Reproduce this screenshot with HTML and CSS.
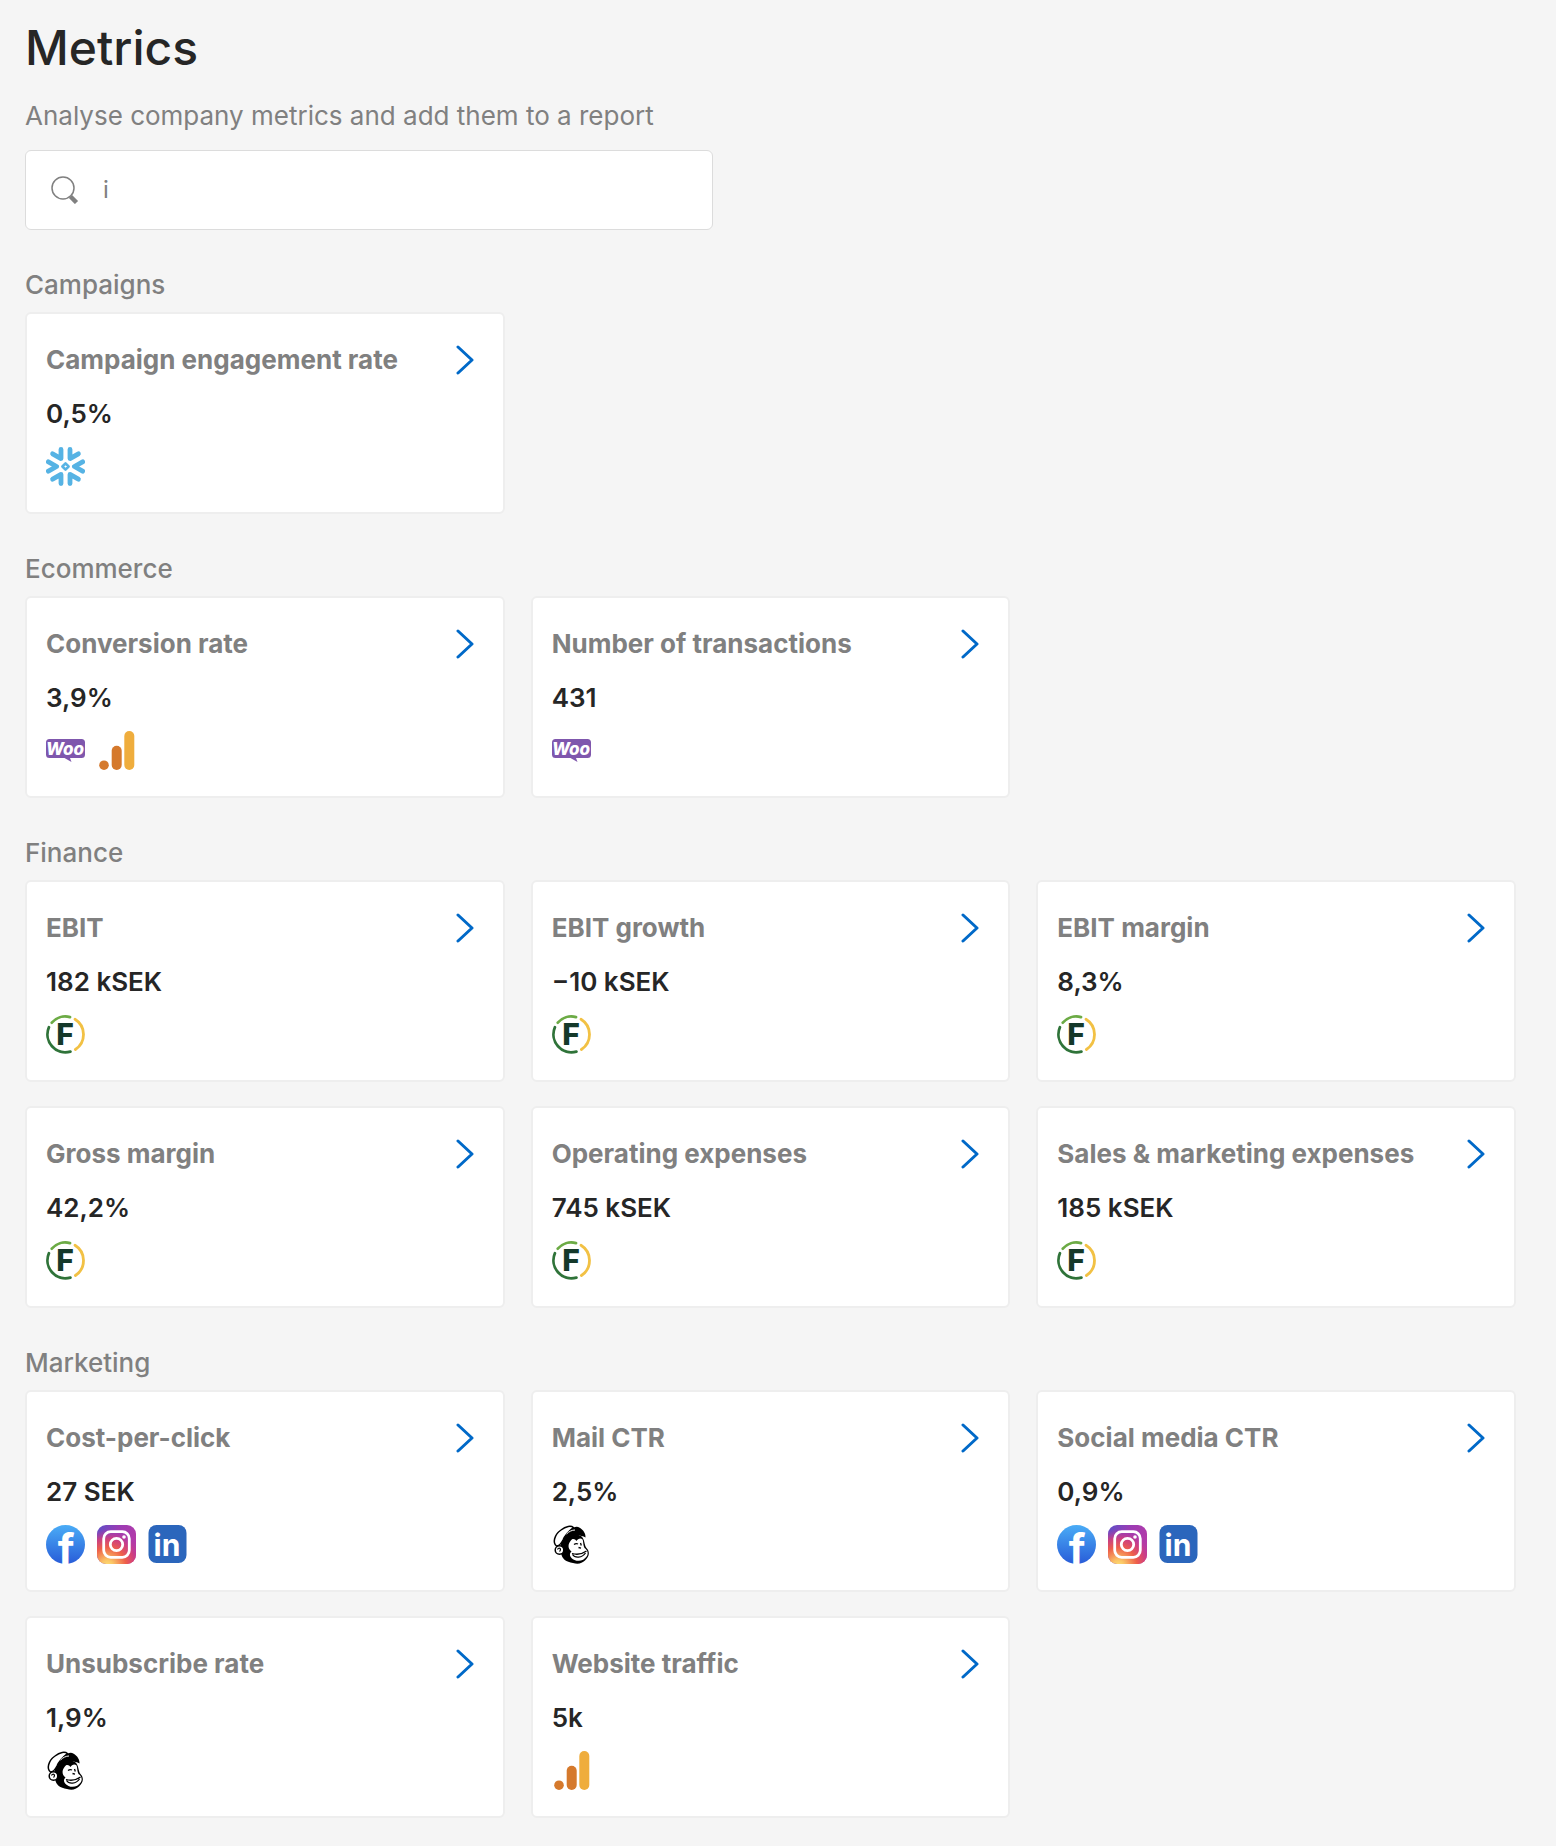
FILE: index.html
```html
<!DOCTYPE html>
<html lang="en">
<head>
    <meta charset="UTF-8">
    <meta name="viewport" content="width=device-width, initial-scale=1.0">
    <title>Metrics</title>
    <link rel="stylesheet" href="styles.css">
</head>
<body>

    <!-- Icon definitions -->
    <svg class="defs" width="0" height="0" aria-hidden="true">
        <defs>
            <linearGradient id="fbFill" x1="0" y1="0" x2="0" y2="1">
                <stop offset="0" stop-color="#4aacf6"/>
                <stop offset="1" stop-color="#285cd8"/>
            </linearGradient>
            <linearGradient id="igBase" x1="0" y1="0" x2="1" y2="0.4">
                <stop offset="0" stop-color="#5b50c8"/>
                <stop offset="0.5" stop-color="#9a3cb4"/>
                <stop offset="1" stop-color="#b43aa8"/>
            </linearGradient>
            <radialGradient id="igGlow" cx="0.27" cy="1.05" r="0.95">
                <stop offset="0" stop-color="#fde07a"/>
                <stop offset="0.15" stop-color="#fbc766"/>
                <stop offset="0.5" stop-color="#ee5f4a"/>
                <stop offset="0.75" stop-color="#d23f7c" stop-opacity="0.9"/>
                <stop offset="1" stop-color="#b43aa8" stop-opacity="0"/>
            </radialGradient>
        </defs>
        <symbol id="chevron" viewBox="0 0 18 30">
            <path d="M2 2L16 15L2 28" fill="none" stroke="#0069c8" stroke-width="3" stroke-linecap="round" stroke-linejoin="round"/>
        </symbol>
        <symbol id="snowflake" viewBox="0 0 39 39">
            <g fill="none" stroke="#56b3e4" stroke-width="4.8" stroke-linecap="round" stroke-linejoin="round">
                <path d="M15 2.4V11.6L6.6 6.8"/>
                <path d="M24 2.4V11.6L32.4 6.8"/>
                <path d="M15 36.6V27.4L6.6 32.2"/>
                <path d="M24 36.6V27.4L32.4 32.2"/>
                <path d="M2.4 14.8L10.6 19.5L2.4 24.2"/>
                <path d="M36.6 14.8L28.4 19.5L36.6 24.2"/>
                <path d="M19.5 16.4L22.6 19.5L19.5 22.6L16.4 19.5Z" stroke-width="2.6"/>
            </g>
        </symbol>
        <symbol id="woo" viewBox="0 0 39 39">
            <path d="M3.5 8H35.5A3.5 3.5 0 0 1 39 11.5V23.5A3.5 3.5 0 0 1 35.5 27H24L25.500 31L18.5 27H3.5A3.5 3.5 0 0 1 0 23.5V11.5A3.5 3.5 0 0 1 3.5 8Z" fill="#7f57ad"/>
        </symbol>
        <symbol id="analytics" viewBox="0 0 39 39">
            <circle cx="7" cy="34.2" r="4.8" fill="#d5792c"/>
            <rect x="14.7" y="14.7" width="10" height="24.3" rx="5" fill="#d5792c"/>
            <rect x="27.3" y="0" width="10" height="39" rx="5" fill="#efad3d"/>
        </symbol>
        <symbol id="fortnox" viewBox="0 0 39 39">
            <g fill="none" stroke-width="2.8" stroke-linecap="round">
                <path d="M5.8 7.7A18 18 0 0 1 24 2.1" stroke="#6cab45"/>
                <path d="M29 4.2A18 18 0 0 1 29.4 34.5" stroke="#f2c144"/>
                <path d="M2.9 12.3A18 18 0 0 0 24.4 36.6" stroke="#2f7339"/>
            </g>
        </symbol>
        <symbol id="facebook" viewBox="0 0 39 39">
            <circle cx="19.5" cy="19.5" r="19.5" fill="url(#fbFill)"/>
        </symbol>
        <symbol id="instagram" viewBox="0 0 39 39">
            <rect width="39" height="39" rx="9" fill="url(#igBase)"/>
            <rect width="39" height="39" rx="9" fill="url(#igGlow)"/>
            <g fill="none" stroke="#fff" stroke-width="2.8">
                <rect x="6.7" y="6.7" width="25.6" height="25.6" rx="7"/>
                <circle cx="19.5" cy="19.5" r="6.2"/>
            </g>
            <circle cx="27" cy="12" r="1.8" fill="#fff"/>
        </symbol>
        <symbol id="linkedin" viewBox="0 0 39 39">
            <rect x="0.5" y="0" width="38" height="38" rx="8" fill="#2b66bc"/>
        </symbol>
        <symbol id="mailchimp" viewBox="0 0 39 39">
            <path d="M9 15C14 9 22 7 29 11C33 14 32 20 34.5 23C38.500 27 37 32 33 35.500C30 38.500 26 39.500 21 38C14 37 10 34 9 28Z"/>
            <path d="M4.5 21C.5 18 2 10 9 5C14 1 19 .5 21.5 2.5C17 6 13 10 11 15C9 19 7 21 4.5 21Z" fill="#fff" stroke="#000" stroke-width="1.5"/>
            <path d="M12 14C15 7 21 1.500 25 1.800C30 3 34 8 33.500 12.500C28 9.500 19 10 12 14Z"/>
            <path d="M14.500 9C17 6.500 20 5 23 5" fill="none" stroke="#fff" stroke-width="1"/>
            <path d="M18.500 16C20 13 23 13.500 24.500 16C26 13 30.500 12.500 31 16C31.300 19 31.500 21 32.500 23C35.500 25 36.500 28 35 31C32 35.500 27 37 22.500 35C18 33 16.500 29 19.500 26.500C15.500 23.500 16 19 18.500 16Z" fill="#fff"/>
            <circle cx="7.5" cy="25" r="4.300" fill="#fff" stroke="#000" stroke-width="1.500"/>
            <path d="M5.5 24.500C7 21.500 10 24 7.500 26.500" fill="none" stroke="#000" stroke-width="1.200"/>
            <path d="M22 19.500Q24 18 26 19M28.500 18L29.300 20.500M26.500 22.500L29 23.200M20 28.500C25 30 31 28.500 34.500 26M20.500 29.500C23 33.500 30 33 33.500 28" fill="none" stroke="#000" stroke-width="1.300"/>
        </symbol>
    </svg>

    <main class="page">
        <h1>Metrics</h1>
        <label class="intro" for="search">Analyse company metrics and add them to a report</label>
        <div class="search">
            <svg class="search-icon" viewBox="0 0 28 28" aria-hidden="true">
                <circle cx="12" cy="12" r="11" fill="none" stroke="#808080" stroke-width="1.5"/>
                <path d="M19.500 20.500L25.500 26.500" stroke="#808080" stroke-width="4.5"/>
            </svg>
            <input type="text" id="search" value="i">
        </div>

        <section>
            <h2>Campaigns</h2>
            <div class="cards">
                <a class="card" href="#">
                    <div class="card-head"><h3>Campaign engagement rate</h3><svg class="chevron"><use href="#chevron"/></svg></div>
                    <p class="value">0,5%</p>
                    <div class="sources"><svg><use href="#snowflake"/></svg></div>
                </a>
            </div>
        </section>

        <section>
            <h2>Ecommerce</h2>
            <div class="cards">
                <a class="card" href="#">
                    <div class="card-head"><h3>Conversion rate</h3><svg class="chevron"><use href="#chevron"/></svg></div>
                    <p class="value">3,9%</p>
                    <div class="sources"><svg><use href="#woo"/><text class="woo-text" x="19" y="24">Woo</text></svg><svg><use href="#analytics"/></svg></div>
                </a>
                <a class="card" href="#">
                    <div class="card-head"><h3>Number of transactions</h3><svg class="chevron"><use href="#chevron"/></svg></div>
                    <p class="value">431</p>
                    <div class="sources"><svg><use href="#woo"/><text class="woo-text" x="19" y="24">Woo</text></svg></div>
                </a>
            </div>
        </section>

        <section>
            <h2>Finance</h2>
            <div class="cards">
                <a class="card" href="#">
                    <div class="card-head"><h3>EBIT</h3><svg class="chevron"><use href="#chevron"/></svg></div>
                    <p class="value">182 kSEK</p>
                    <div class="sources"><svg><use href="#fortnox"/><text class="fortnox-text" x="19" y="30">F</text></svg></div>
                </a>
                <a class="card" href="#">
                    <div class="card-head"><h3>EBIT growth</h3><svg class="chevron"><use href="#chevron"/></svg></div>
                    <p class="value">−10 kSEK</p>
                    <div class="sources"><svg><use href="#fortnox"/><text class="fortnox-text" x="19" y="30">F</text></svg></div>
                </a>
                <a class="card" href="#">
                    <div class="card-head"><h3>EBIT margin</h3><svg class="chevron"><use href="#chevron"/></svg></div>
                    <p class="value">8,3%</p>
                    <div class="sources"><svg><use href="#fortnox"/><text class="fortnox-text" x="19" y="30">F</text></svg></div>
                </a>
                <a class="card" href="#">
                    <div class="card-head"><h3>Gross margin</h3><svg class="chevron"><use href="#chevron"/></svg></div>
                    <p class="value">42,2%</p>
                    <div class="sources"><svg><use href="#fortnox"/><text class="fortnox-text" x="19" y="30">F</text></svg></div>
                </a>
                <a class="card" href="#">
                    <div class="card-head"><h3>Operating expenses</h3><svg class="chevron"><use href="#chevron"/></svg></div>
                    <p class="value">745 kSEK</p>
                    <div class="sources"><svg><use href="#fortnox"/><text class="fortnox-text" x="19" y="30">F</text></svg></div>
                </a>
                <a class="card" href="#">
                    <div class="card-head"><h3>Sales &amp; marketing expenses</h3><svg class="chevron"><use href="#chevron"/></svg></div>
                    <p class="value">185 kSEK</p>
                    <div class="sources"><svg><use href="#fortnox"/><text class="fortnox-text" x="19" y="30">F</text></svg></div>
                </a>
            </div>
        </section>

        <section>
            <h2>Marketing</h2>
            <div class="cards">
                <a class="card" href="#">
                    <div class="card-head"><h3>Cost-per-click</h3><svg class="chevron"><use href="#chevron"/></svg></div>
                    <p class="value">27 SEK</p>
                    <div class="sources">
                        <svg><use href="#facebook"/><text class="facebook-text" x="20" y="39">f</text></svg>
                        <svg><use href="#instagram"/></svg>
                        <svg><use href="#linkedin"/><text class="linkedin-text" x="19" y="31">in</text></svg>
                    </div>
                </a>
                <a class="card" href="#">
                    <div class="card-head"><h3>Mail CTR</h3><svg class="chevron"><use href="#chevron"/></svg></div>
                    <p class="value">2,5%</p>
                    <div class="sources"><svg><use href="#mailchimp"/></svg></div>
                </a>
                <a class="card" href="#">
                    <div class="card-head"><h3>Social media CTR</h3><svg class="chevron"><use href="#chevron"/></svg></div>
                    <p class="value">0,9%</p>
                    <div class="sources">
                        <svg><use href="#facebook"/><text class="facebook-text" x="20" y="39">f</text></svg>
                        <svg><use href="#instagram"/></svg>
                        <svg><use href="#linkedin"/><text class="linkedin-text" x="19" y="31">in</text></svg>
                    </div>
                </a>
                <a class="card" href="#">
                    <div class="card-head"><h3>Unsubscribe rate</h3><svg class="chevron"><use href="#chevron"/></svg></div>
                    <p class="value">1,9%</p>
                    <div class="sources"><svg><use href="#mailchimp"/></svg></div>
                </a>
                <a class="card" href="#">
                    <div class="card-head"><h3>Website traffic</h3><svg class="chevron"><use href="#chevron"/></svg></div>
                    <p class="value">5k</p>
                    <div class="sources"><svg><use href="#analytics"/></svg></div>
                </a>
            </div>
        </section>
    </main>

</body>
</html>
```
FILE: styles.css
```css
* {
    box-sizing: border-box;
}
body {
    margin: 0;
    background-color: #f5f5f5;
    color: #262626;
    font-family: Inter, sans-serif;
    font-size: 26px;
    line-height: 32px;
}
h1, h2, h3, p {
    margin: 0;
}
.defs {
    display: block;
}
.page {
    padding: 18px 40px 28px 25px;
}
h1 {
    font-size: 48px;
    font-weight: 500;
    line-height: 60px;
}
.intro {
    display: block;
    margin: 22px 0 18px;
    color: #808080;
}
.search {
    display: flex;
    align-items: center;
    gap: 24px;
    max-width: 688px;
    height: 80px;
    padding: 0 25px;
    background: white;
    border: 1px solid #dcdcdc;
    border-radius: 6px;
}
.search-icon {
    width: 28px;
    height: 28px;
}
.search input {
    flex: 1;
    min-width: 0;
    padding: 0;
    border: none;
    outline: none;
    background: none;
    color: #808080;
    font: inherit;
    font-size: 24px;
}
section {
    margin-top: 39px;
}
h2 {
    margin-bottom: 11px;
    color: #808080;
    font-size: 26px;
    font-weight: 500;
}
.cards {
    display: grid;
    grid-template-columns: repeat(3, 1fr);
    gap: 24px 26px;
}
.card {
    display: block;
    padding: 28px 19px 26px;
    background: white;
    border: 2px solid #eeeeee;
    border-radius: 6px;
    color: inherit;
    line-height: 36px;
    text-decoration: none;
}
.card:hover {
    border-color: #dcdcdc;
}
.card-head {
    display: flex;
    align-items: center;
    justify-content: space-between;
    padding-right: 10px;
}
h3 {
    color: #808080;
    font-size: 26px;
    font-weight: 700;
}
.chevron {
    flex: none;
    width: 18px;
    height: 30px;
}
.value {
    margin: 18px 0 15px;
    font-weight: 600;
}
.sources {
    display: flex;
    gap: 12px;
}
.sources svg {
    width: 39px;
    height: 39px;
}

/* Lettering inside the brand icons */
.sources text {
    fill: white;
    text-anchor: middle;
}
.sources .woo-text {
    font-size: 17px;
    font-style: italic;
    font-weight: 800;
}
.sources .fortnox-text {
    fill: #15392a;
    font-size: 30px;
    font-weight: 800;
}
.sources .facebook-text {
    font-size: 42px;
    font-weight: 700;
}
.sources .linkedin-text {
    font-size: 30px;
    font-weight: 700;
}

@media (max-width: 1000px) {
    .cards {
        grid-template-columns: repeat(2, 1fr);
    }
}
@media (max-width: 640px) {
    .cards {
        grid-template-columns: 1fr;
    }
}
```
